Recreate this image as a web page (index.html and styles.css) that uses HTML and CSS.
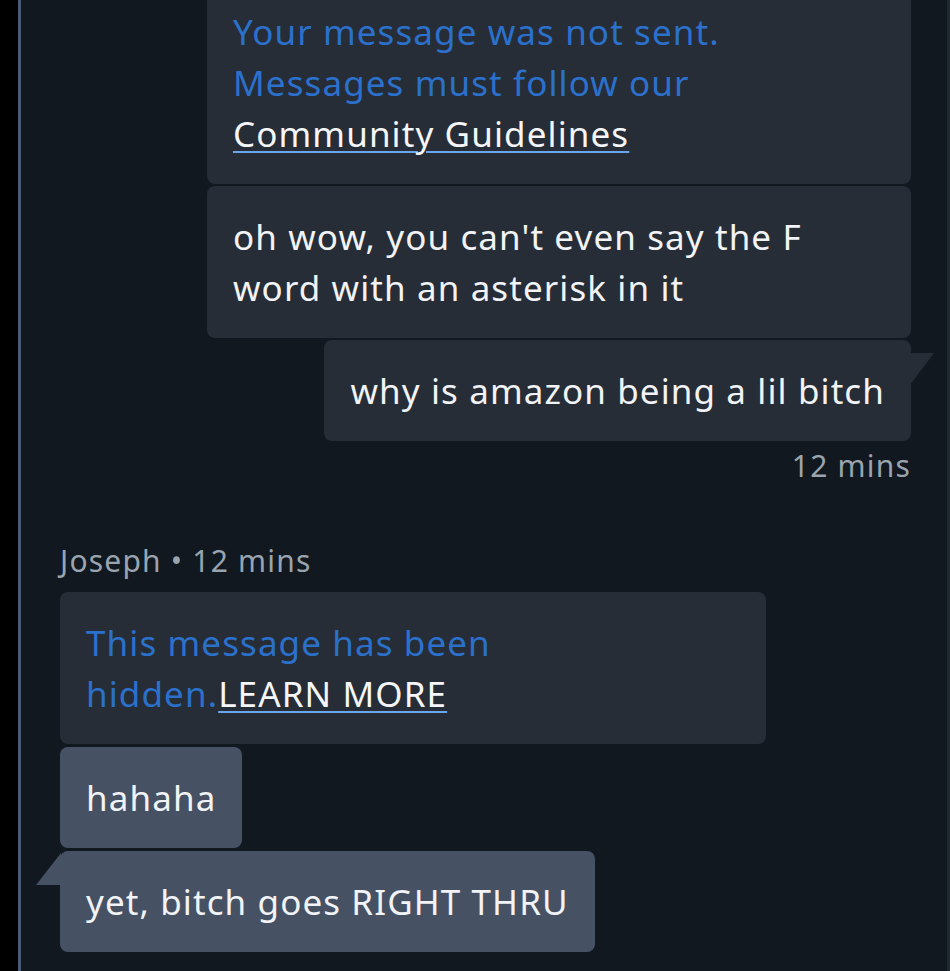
FILE: index.html
```html
<!DOCTYPE html>
<html lang="en">
<head>
<meta charset="utf-8">
<title>Chat</title>
<link rel="stylesheet" href="styles.css">
</head>
<body>
<div class="screen">
  <main class="chat">
    <section class="group out">
      <div class="bubble notice">Your message was not sent.<br>Messages must follow our<br><a class="link" href="#">Community Guidelines</a></div>
      <div class="bubble">oh wow, you can't even say the F<br>word with an asterisk in it</div>
      <div class="bubble tail">why is amazon being a lil bitch</div>
      <div class="meta">12 mins</div>
    </section>
    <section class="group in">
      <div class="meta">Joseph &bull; 12 mins</div>
      <div class="bubble notice wide">This message has been<br>hidden.<a class="link" href="#">LEARN MORE</a></div>
      <div class="bubble light">hahaha</div>
      <div class="bubble light tail">yet, bitch goes RIGHT THRU</div>
    </section>
  </main>
</div>
</body>
</html>
```

FILE: styles.css
```css
html, body {
  margin: 0;
  padding: 0;
  background: #000;
}
body {
  width: 950px;
  height: 971px;
  overflow: hidden;
  font-family: "Noto Sans", "Open Sans", sans-serif;
}
.screen {
  display: flex;
  height: 971px;
  padding-left: 18px;
  box-sizing: border-box;
}
.chat {
  flex: 1;
  background: #111820;
  border-left: 3px solid #4c5b73;
  border-right: 3px solid #1f2731;
  padding: 0 36px 0 39px;
  display: flex;
  flex-direction: column;
}
.group {
  display: flex;
  flex-direction: column;
  gap: 2px;
}
.group.out {
  align-items: flex-end;
  margin-top: -19px;
}
.group.in {
  align-items: flex-start;
  margin-top: 55px;
  gap: 3px;
}
.bubble {
  position: relative;
  box-sizing: border-box;
  max-width: 705px;
  padding: 25px 26px;
  border-radius: 8px;
  background: #272d37;
  color: #f1f3f6;
  font-size: 35px;
  letter-spacing: 1.1px;
  line-height: 51px;
}
.bubble.notice {
  color: #2b71cc;
}
.bubble.wide {
  width: 706px;
  max-width: 706px;
  margin-top: 8px;
}
.group.out .bubble.notice {
  width: 704px;
}
.group.out .bubble:nth-child(2) {
  width: 704px;
}
.bubble.light {
  background: #465264;
}
.link {
  color: #f4f6f9;
  text-decoration: underline;
  text-decoration-color: #6aa6ee;
  text-decoration-thickness: 2px;
  text-underline-offset: 4px;
}
.meta {
  color: #9aa4af;
  font-size: 30px;
  letter-spacing: 1.2px;
  line-height: 40px;
  margin-top: 3px;
}
.group.in .meta {
  margin-top: 0;
}
.group.out .bubble.tail::after {
  content: "";
  position: absolute;
  top: 13px;
  right: -23px;
  width: 24px;
  height: 32px;
  background: inherit;
  border-radius: 0;
  clip-path: polygon(0 0, 100% 0, 0 100%);
}
.group.in .bubble.tail::before {
  content: "";
  position: absolute;
  top: 2px;
  left: -24px;
  width: 25px;
  height: 32px;
  background: inherit;
  clip-path: polygon(100% 0, 100% 100%, 0 100%);
}
```
